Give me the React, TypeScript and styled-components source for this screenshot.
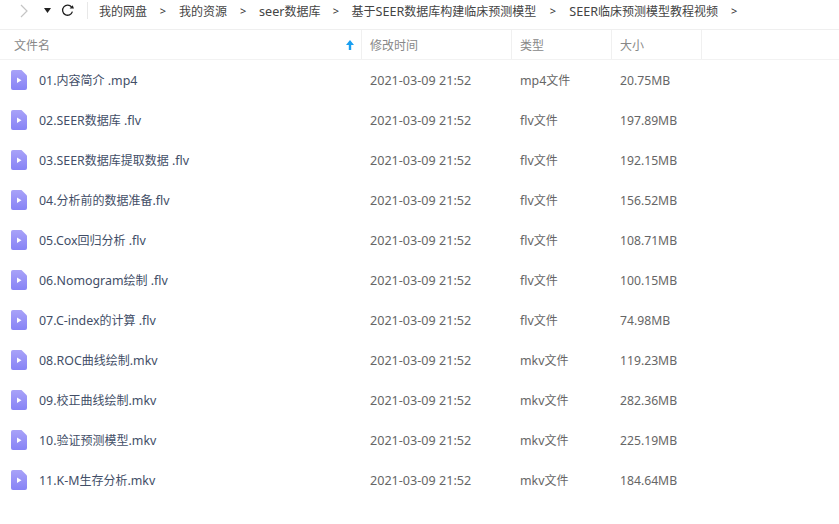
import * as React from 'react';
import styled, { createGlobalStyle } from 'styled-components';

const GlobalStyle = createGlobalStyle`
  html, body {
    margin: 0;
    padding: 0;
    background: #fff;
  }
  body {
    font-family: "Noto Sans", "Noto Sans CJK SC", sans-serif;
    font-size: 12px;
    overflow: hidden;
  }
`;

const Page = styled.div`
  width: 839px;
  height: 524px;
  overflow: hidden;
`;

const Toolbar = styled.div`
  display: flex;
  align-items: flex-start;
  height: 30px;
  padding-top: 2px;
  box-sizing: border-box;
  border-bottom: 1px solid #efefef;
  color: #424e67;
`;

const NavIcons = styled.div`
  display: flex;
  align-items: center;
  width: 88px;
  height: 17px;
  padding-left: 20px;
  box-sizing: border-box;
  border-right: 1px solid #e8e8e8;
`;

const DropArrow = styled.svg`
  margin-left: 16px;
`;

const Refresh = styled.svg`
  margin-left: 10px;
`;

const Crumbs = styled.div`
  display: flex;
  align-items: center;
  height: 17px;
  padding-left: 11px;
`;

const Crumb = styled.span`
  color: #444;
  white-space: pre;
`;

const Sep = styled.span<{ $w: number }>`
  color: #333;
  width: ${(p) => p.$w}px;
  text-align: center;
  font-size: 11px;
  flex: none;
`;

const HeaderRow = styled.div`
  display: flex;
  height: 30px;
  box-sizing: border-box;
  border-bottom: 1px solid #f2f2f2;
`;

const HeadCell = styled.div<{ $w: number }>`
  width: ${(p) => p.$w}px;
  box-sizing: border-box;
  display: flex;
  align-items: center;
  justify-content: space-between;
  padding: 0 7px 0 8px;
  border-right: 1px solid #f0f0f0;
  color: #888;
  flex: none;

  &:first-child {
    padding-left: 14px;
  }
`;

const Row = styled.div`
  display: flex;
  align-items: center;
  height: 40px;
  color: #666;
`;

const NameCell = styled.div`
  width: 362px;
  flex: none;
  display: flex;
  align-items: center;
  padding-left: 11px;
  box-sizing: border-box;
  color: #424e67;
`;

const FileName = styled.span`
  margin-left: 12px;
  white-space: pre;
`;

const Cell = styled.div<{ $w: number }>`
  width: ${(p) => p.$w}px;
  flex: none;
  padding-left: 8px;
  box-sizing: border-box;
  white-space: pre;
`;

// the latin glyphs of the original font run wider than Noto Sans at 12px
const Latin = styled.span`
  font-size: 12.6px;
`;

const FileLatin = styled.span`
  font-size: 12.4px;
`;

const SizeText = styled.span`
  font-size: 12.2px;
`;

function Mixed({ text, as: Part = Latin }: { text: string; as?: typeof Latin }) {
  const parts = text.match(/[\u4e00-\u9fff]+|[^\u4e00-\u9fff]+/g) || [];
  return (
    <>
      {parts.map((part, i) =>
        /[\u4e00-\u9fff]/.test(part) ? (
          <span key={i}>{part}</span>
        ) : (
          <Part key={i}>{part}</Part>
        ),
      )}
    </>
  );
}

const files = [
  ['01.内容简介 .mp4', 'mp4文件', '20.75MB'],
  ['02.SEER数据库 .flv', 'flv文件', '197.89MB'],
  ['03.SEER数据库提取数据 .flv', 'flv文件', '192.15MB'],
  ['04.分析前的数据准备.flv', 'flv文件', '156.52MB'],
  ['05.Cox回归分析 .flv', 'flv文件', '108.71MB'],
  ['06.Nomogram绘制 .flv', 'flv文件', '100.15MB'],
  ['07.C-index的计算 .flv', 'flv文件', '74.98MB'],
  ['08.ROC曲线绘制.mkv', 'mkv文件', '119.23MB'],
  ['09.校正曲线绘制.mkv', 'mkv文件', '282.36MB'],
  ['10.验证预测模型.mkv', 'mkv文件', '225.19MB'],
  ['11.K-M生存分析.mkv', 'mkv文件', '184.64MB'],
];

const crumbs: [string, number][] = [
  ['我的网盘', 32],
  ['我的资源', 32],
  ['seer数据库', 31],
  ['基于SEER数据库构建临床预测模型', 33],
  ['SEER临床预测模型教程视频', 32],
];

function VideoIcon() {
  return (
    <svg width="16" height="20" viewBox="0 0 16 20">
      <defs>
        <linearGradient id="vid" x1="0" y1="0" x2="0" y2="1">
          <stop offset="0" stopColor="#a8a2f8" />
          <stop offset="1" stopColor="#8783f6" />
        </linearGradient>
      </defs>
      <path
        d="M2 0H10.5L16 5.5V18a2 2 0 0 1-2 2H2a2 2 0 0 1-2-2V2a2 2 0 0 1 2-2Z"
        fill="url(#vid)"
      />
      <path d="M6 7.5L10.5 10.25L6 13Z" fill="#fff" />
    </svg>
  );
}

export default function App() {
  return (
    <Page>
      <GlobalStyle />
      <Toolbar>
        <NavIcons>
          <svg width="8" height="14" viewBox="0 0 8 14">
            <path d="M1 1L7 7L1 13" fill="none" stroke="#c4c4c4" strokeWidth="1.2" />
          </svg>
          <DropArrow width="7" height="5" viewBox="0 0 7 5">
            <path d="M0 0H7L3.5 5Z" fill="#222" />
          </DropArrow>
          <Refresh width="13" height="13" viewBox="0 0 13 13">
            <path
              d="M10.6 3.2A5 5 0 1 0 11.4 7.6"
              fill="none"
              stroke="#222"
              strokeWidth="1.3"
            />
            <path d="M8.6 4.6H13L11.6 1.2Z" fill="#222" />
          </Refresh>
        </NavIcons>
        <Crumbs>
          {crumbs.map(([label, w]) => (
            <React.Fragment key={label}>
              <Crumb>
                <Mixed text={label} />
              </Crumb>
              <Sep $w={w}>&gt;</Sep>
            </React.Fragment>
          ))}
        </Crumbs>
      </Toolbar>
      <HeaderRow>
        <HeadCell $w={362}>
          文件名
          <svg width="8" height="10" viewBox="0 0 8 10">
            <path d="M4 0L8 5H5.2V10H2.8V5H0Z" fill="#1a9ff0" />
          </svg>
        </HeadCell>
        <HeadCell $w={150}>修改时间</HeadCell>
        <HeadCell $w={100}>类型</HeadCell>
        <HeadCell $w={90}>大小</HeadCell>
      </HeaderRow>
      {files.map(([name, type, size]) => (
        <Row key={name}>
          <NameCell>
            <VideoIcon />
            <FileName>
              <Mixed text={name} as={FileLatin} />
            </FileName>
          </NameCell>
          <Cell $w={150}>
            <Latin>2021-03-09 21:52</Latin>
          </Cell>
          <Cell $w={100}>
            <Mixed text={type} as={FileLatin} />
          </Cell>
          <Cell $w={90}>
            <SizeText>{size}</SizeText>
          </Cell>
        </Row>
      ))}
    </Page>
  );
}
